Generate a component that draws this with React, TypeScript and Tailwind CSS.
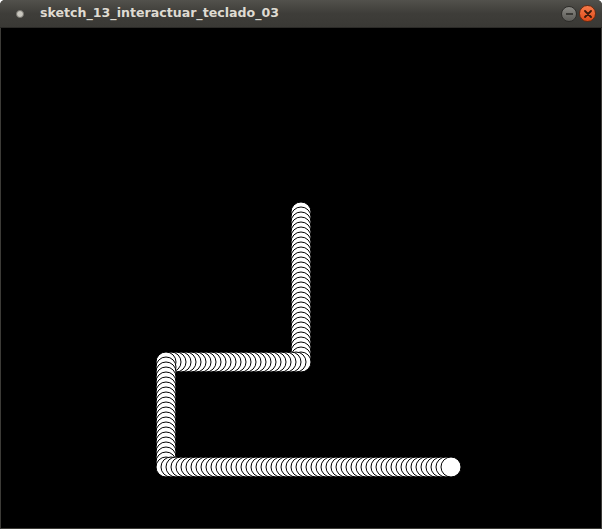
import React from 'react';

type Pt = { x: number; y: number };

// path of the snake, in canvas coords (600x500), 5px per step
const buildTrail = (): Pt[] => {
    const pts: Pt[] = [];
    let x = 300;
    let y = 184;
    pts.push({ x, y });
    const moves: [number, number, number][] = [
        [0, 5, 30],
        [-5, 0, 27],
        [0, 5, 21],
        [5, 0, 57],
    ];
    moves.forEach(([dx, dy, n]) => {
        for (let i = 0; i < n; i++) {
            x += dx;
            y += dy;
            pts.push({ x, y });
        }
    });
    return pts;
};

const trail = buildTrail();

const TitleBar: React.FC = () => (
    <div className="flex items-center h-[28px] rounded-t-[5px] bg-gradient-to-b from-[#52514c] via-[#3e3d39] to-[#3a3935] border-b border-[#2b2a27]">
        <div className="w-[20px] flex justify-center ml-[10px]">
            <div className="w-[8px] h-[8px] rounded-full bg-[#c9c7bf] border border-[#77756f]" />
        </div>
        <span
            className="ml-[10px] text-[12.6px] font-bold text-[#dfdbd2]"
            style={{ fontFamily: '"DejaVu Sans", sans-serif' }}
        >
            sketch_13_interactuar_teclado_03
        </span>
        <div className="ml-auto mr-[6px] flex items-center gap-[2px]">
            <div className="w-[16px] h-[16px] rounded-full bg-gradient-to-b from-[#8a8984] to-[#5c5b57] border border-[#2e2d2a] flex items-center justify-center">
                <div className="w-[7px] h-[2px] bg-[#3a3935]" />
            </div>
            <div className="w-[17px] h-[17px] rounded-full bg-gradient-to-b from-[#f77b4a] to-[#df4a16] border border-[#6b2a10] flex items-center justify-center">
                <svg width="8" height="8" viewBox="0 0 8 8">
                    <path d="M1 1 L7 7 M7 1 L1 7" stroke="#3a1a0c" strokeWidth="1.8" strokeLinecap="round" />
                </svg>
            </div>
        </div>
    </div>
);

export default function App() {
    return (
        <div className="w-[602px] h-[529px] bg-[#3c3b37] rounded-t-[5px] flex flex-col">
            <TitleBar />
            <div className="mx-[1px] w-[600px] h-[500px] bg-black">
                <svg width="600" height="500" viewBox="0 0 600 500">
                    {trail.map((p, i) => (
                        <circle key={i} cx={p.x} cy={p.y} r="10" fill="#fff" stroke="#000" strokeWidth="1" />
                    ))}
                </svg>
            </div>
        </div>
    );
}
